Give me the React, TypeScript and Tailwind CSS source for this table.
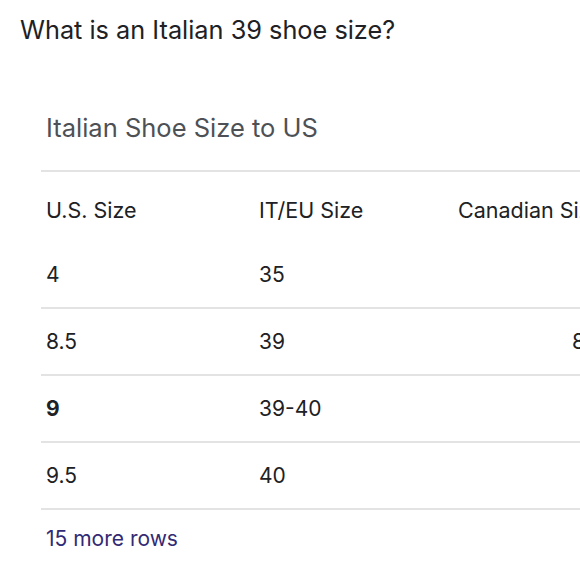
import React from "react";

const rows = [
  { us: "4", eu: "35", ca: "", bold: false },
  { us: "8.5", eu: "39", ca: "8", bold: false },
  { us: "9", eu: "39-40", ca: "", bold: true },
  { us: "9.5", eu: "40", ca: "", bold: false },
];

export default function App() {
  return (
    <div
      className="w-[580px] h-[580px] overflow-hidden bg-white"
      style={{ fontFamily: "Inter, 'Liberation Sans', sans-serif" }}
    >
      <div className="pl-[20px] pt-[14px]">
        <h1 className="text-[25.3px] leading-[32px] text-[#202124] font-normal whitespace-nowrap">
          What is an Italian 39 shoe size?
        </h1>
      </div>
      <div className="ml-[41px] mt-[66px] w-[700px]">
        <div className="pl-[5px] text-[25.5px] leading-[32px] text-[#4d5156] whitespace-nowrap">
          Italian Shoe Size to US
        </div>
        <div className="mt-[26px] h-[2px] bg-[#e3e3e3]" />
        <div className="flex h-[70px] pt-[26px] text-[21.5px] leading-[24px] text-[#202124] whitespace-nowrap">
          <div className="w-[218px] pl-[5px]">U.S. Size</div>
          <div className="w-[199px]">IT/EU Size</div>
          <div className="w-[200px]">Canadian Size</div>
        </div>
        {rows.map((r, i) => (
          <div key={i}>
            {i > 0 && <div className="h-[2px] bg-[#e3e3e3]" />}
            <div className="flex h-[65px] items-center text-[21px] leading-[24px] text-[#202124] whitespace-nowrap">
              <div className={"w-[218px] pl-[5px] " + (r.bold ? "font-bold" : "")}>{r.us}</div>
              <div className="w-[199px]">{r.eu}</div>
              <div className="w-[200px] pl-[114px]">{r.ca}</div>
            </div>
          </div>
        ))}
        <div className="h-[2px] bg-[#e3e3e3]" />
        <div className="pl-[5px] pt-[16px] text-[21px] leading-[26px] text-[#322a74] whitespace-nowrap">
          15 more rows
        </div>
      </div>
    </div>
  );
}
